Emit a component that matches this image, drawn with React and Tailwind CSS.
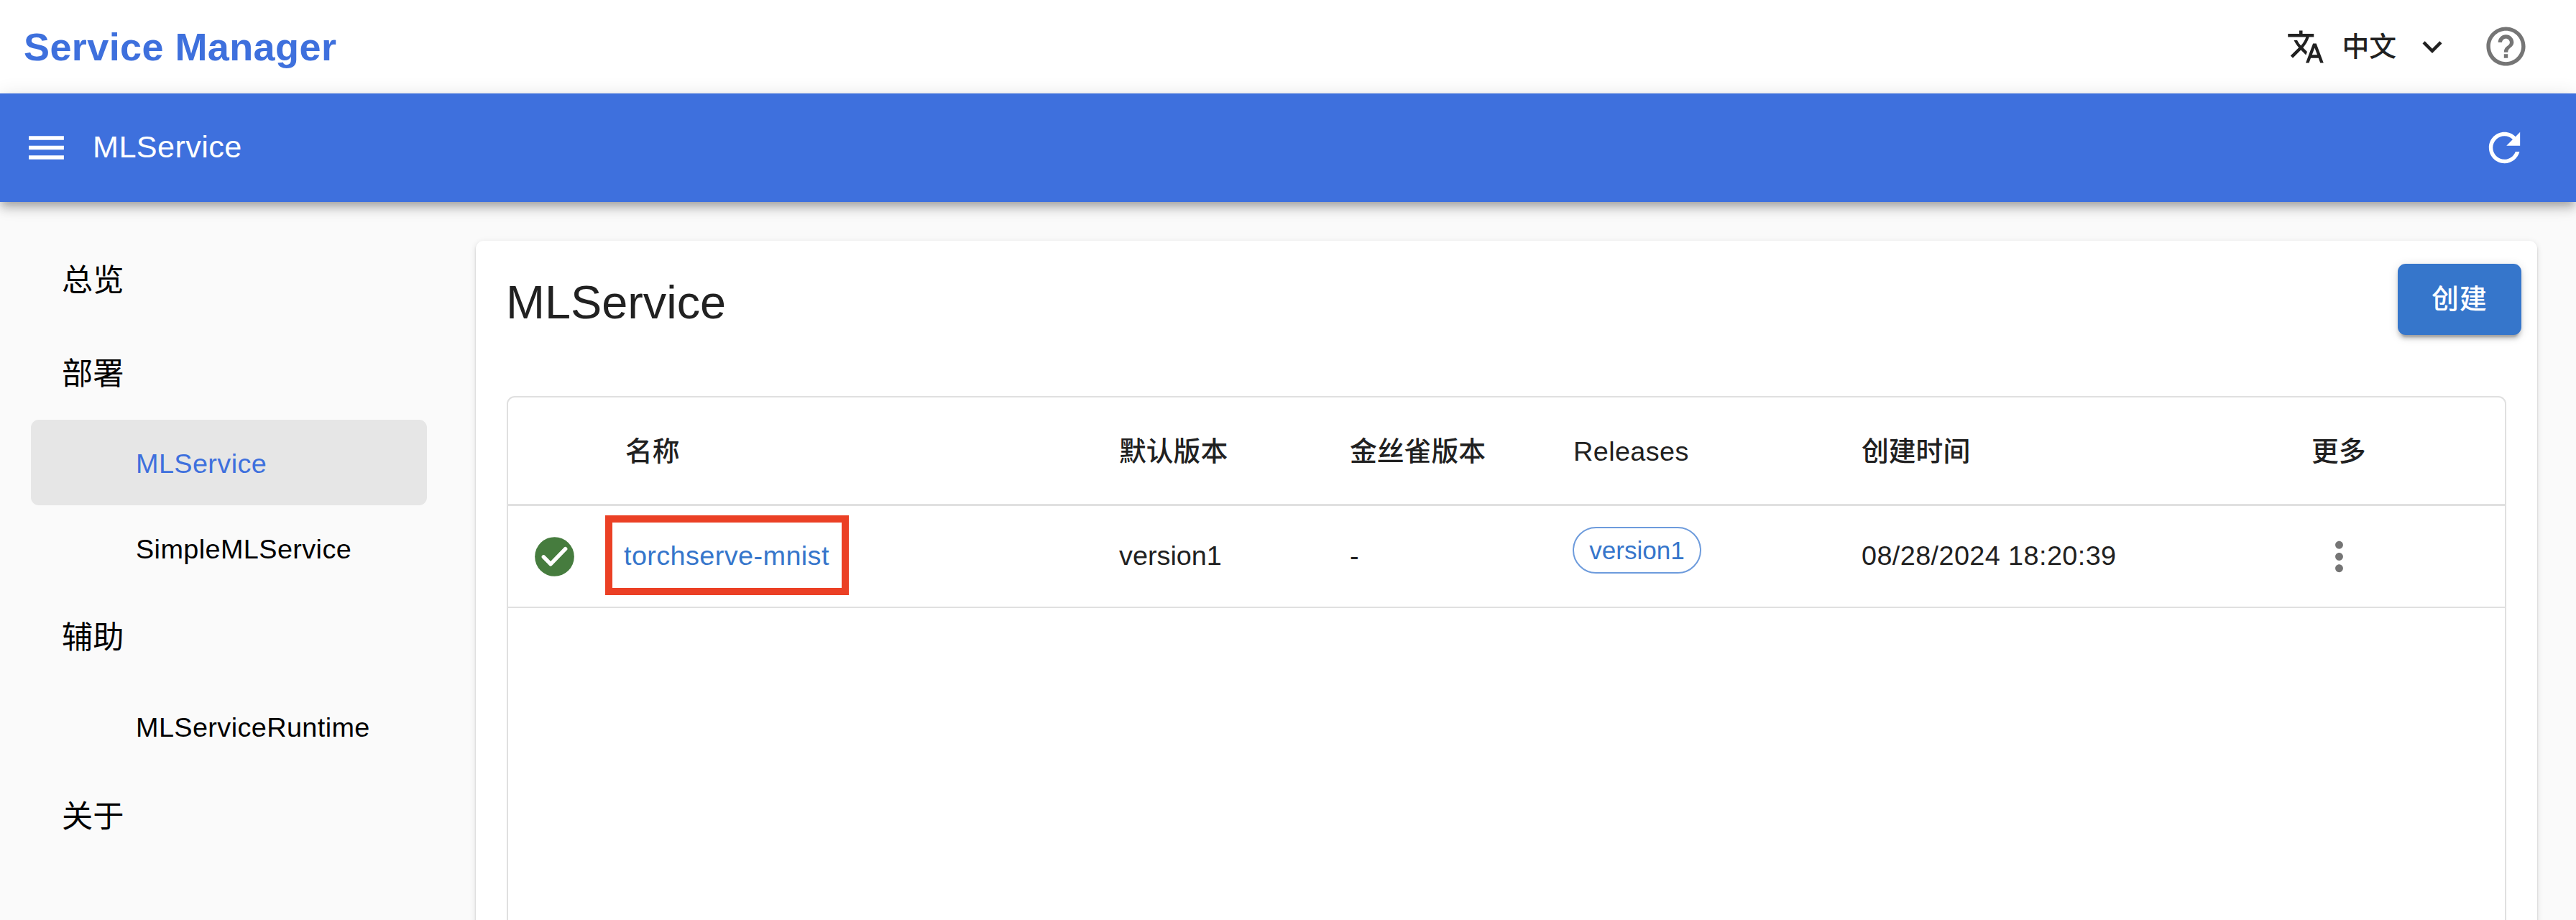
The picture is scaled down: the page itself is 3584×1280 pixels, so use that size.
const CHILD = 'flex h-[118.8px] items-center rounded-[11px] pt-[3px] pl-[146px] text-[37.8px] tracking-[0.0107em]';
const GROUP = 'flex h-[129.6px] items-center pt-[2px] pl-[43px] text-[43.2px]';

// Material-style 24-unit glyph
function Glyph({ d, className }) {
  return (
    <svg viewBox="0 0 24 24" fill="currentColor" className={className}>
      <path d={d} />
    </svg>
  );
}

const ICONS = {
  translate:
    'm12.87 15.07-2.54-2.51.03-.03c1.74-1.94 2.98-4.17 3.71-6.53H17V4h-7V2H8v2H1v1.99h11.17C11.5 7.92 10.44 9.75 9 11.35 8.07 10.32 7.3 9.19 6.69 8h-2c.73 1.63 1.73 3.17 2.98 4.56l-5.09 5.02L4 19l5-5 3.11 3.11.76-2.04zM18.5 10h-2L12 22h2l1.12-3h4.75L21 22h2l-4.5-12zm-2.62 7 1.62-4.33L19.12 17h-3.24z',
  expand: 'M16.59 8.59 12 13.17 7.41 8.59 6 10l6 6 6-6z',
  help: 'M11 18h2v-2h-2v2zm1-16C6.48 2 2 6.48 2 12s4.48 10 10 10 10-4.48 10-10S17.52 2 12 2zm0 18c-4.41 0-8-3.59-8-8s3.59-8 8-8 8 3.59 8 8-3.59 8-8 8zm0-14c-2.21 0-4 1.79-4 4h2c0-1.1.9-2 2-2s2 .9 2 2c0 2-3 1.75-3 5h2c0-2.25 3-2.5 3-5 0-2.21-1.79-4-4-4z',
  menu: 'M3 18h18v-2H3v2zm0-5h18v-2H3v2zm0-7v2h18V6H3z',
  refresh:
    'M17.65 6.35C16.2 4.9 14.21 4 12 4c-4.42 0-7.99 3.58-7.99 8s3.57 8 7.99 8c3.73 0 6.84-2.55 7.73-6h-2.08c-.82 2.33-3.04 4-5.65 4-3.31 0-6-2.69-6-6s2.69-6 6-6c1.66 0 3.14.69 4.22 1.78L13 11h7V4l-2.35 2.35z',
  more: 'M12 8c1.1 0 2-.9 2-2s-.9-2-2-2-2 .9-2 2 .9 2 2 2zm0 2c-1.1 0-2 .9-2 2s.9 2 2 2 2-.9 2-2-.9-2-2-2zm0 6c-1.1 0-2 .9-2 2s.9 2 2 2 2-.9 2-2-.9-2-2-2z',
};

const COLS = 'grid grid-cols-[163px_687px_321px_311px_401px_548px_1fr] items-center';

export default function App() {
  return (
    <div className="flex h-[1280px] w-[3584px] flex-col overflow-hidden bg-[#fafafa] font-['Liberation_Sans','Noto_Sans_CJK_SC',sans-serif] text-[#212121]">
      <header className="flex h-[130px] shrink-0 items-center bg-white pl-[33px]">
        <h1 className="text-[54px] font-bold leading-none tracking-[0.0075em] text-[#3e70dd]">Service Manager</h1>
        <div className="ml-auto mr-[65px] flex h-[129px] items-center self-start">
          <Glyph d={ICONS.translate} className="size-[54px]" />
          <span className="ml-[23px] mr-[23px] pt-[2px] text-[37.8px] font-medium leading-none">中文</span>
          <Glyph d={ICONS.expand} className="size-[54px]" />
          <Glyph d={ICONS.help} className="ml-[43px] size-[65px] text-[#757575]" />
        </div>
      </header>

      <div className="relative flex h-[151px] shrink-0 items-center bg-[#3e70dd] pl-8 pr-[67px] text-white shadow-[0_5.4px_10.8px_-2.7px_rgba(0,0,0,0.2),0_10.8px_13.5px_0_rgba(0,0,0,0.14),0_2.7px_27px_0_rgba(0,0,0,0.12)]">
        <Glyph d={ICONS.menu} className="size-[65px]" />
        <span className="ml-[32px] pb-[2px] text-[43.2px] leading-none tracking-[0.0094em]">MLService</span>
        <Glyph d={ICONS.refresh} className="ml-auto size-[65px]" />
      </div>

      <div className="flex min-h-0 flex-1">
        <nav className="w-[594px] shrink-0 pl-[43px] pt-[44px] text-black">
          <div className={GROUP}>总览</div>
          <div className={GROUP}>部署</div>
          <div className={`${CHILD} bg-[#e6e6e6] text-[#3e70dd]`}>MLService</div>
          <div className={CHILD}>SimpleMLService</div>
          <div className={GROUP}>辅助</div>
          <div className={CHILD}>MLServiceRuntime</div>
          <div className={GROUP}>关于</div>
        </nav>

        <main className="ml-[68px] mt-[54px] flex h-[1100px] w-[2868px] flex-col rounded-[11px] bg-white pl-[43px] pr-[43px] shadow-[0_5.4px_2.7px_-2.7px_rgba(0,0,0,0.2),0_2.7px_2.7px_0_rgba(0,0,0,0.14),0_2.7px_8.1px_0_rgba(0,0,0,0.12)]">
          <div className="flex h-[216px] shrink-0 items-start justify-between">
            <h2 className="-ml-px mt-[54px] text-[64.8px] leading-none">MLService</h2>
            <button className="-mr-[21px] mt-8 h-[99px] w-[172px] rounded-[11px] bg-[#3676cb] text-[37.8px] font-medium tracking-[0.0286em] text-white shadow-[0_8.1px_2.7px_-5.4px_rgba(0,0,0,0.2),0_5.4px_5.4px_0_rgba(0,0,0,0.14),0_2.7px_13.5px_0_rgba(0,0,0,0.12)]">
              创建
            </button>
          </div>

          <section className="flex-1 rounded-[11px] border-2 border-[#e0e0e0] text-[37.8px] leading-none">
            <div className={`${COLS} h-[151px] border-b-[3px] border-[#e0e0e0] pt-[4px] font-medium`}>
              <span />
              <span>名称</span>
              <span>默认版本</span>
              <span>金丝雀版本</span>
              <span className="font-normal tracking-[0.0107em]">Releases</span>
              <span>创建时间</span>
              <span className="pl-[78px]">更多</span>
            </div>
            <div className={`${COLS} h-[142px] border-b-2 border-[#e0e0e0] tracking-[0.0107em]`}>
              <svg viewBox="0 0 24 24" className="ml-8 size-[65px]">
                <circle cx="12" cy="12" r="10.1" fill="#467c3e" />
                <path d="M6.4 12.1 10 15.8 17.6 8" fill="none" stroke="#fff" strokeWidth="2" strokeLinecap="round" strokeLinejoin="round" />
              </svg>
              <span className="-ml-[28px] -mt-[3px] flex h-[111px] w-[339px] items-center border-[10px] border-[#eb4025] pl-[16px] pt-[3px] text-[#3676cb]">
                torchserve-mnist
              </span>
              <span className="tracking-normal">version1</span>
              <span>-</span>
              <span className="-ml-px -mt-[17px] flex h-[65px] w-[179px] items-center justify-center rounded-full border-2 border-[#6d9bdc] text-[35.1px] tracking-normal text-[#3676cb]">
                version1
              </span>
              <span>08/28/2024 18:20:39</span>
              <Glyph d={ICONS.more} className="ml-[84px] size-[65px] text-[#757575]" />
            </div>
          </section>
        </main>
      </div>
    </div>
  );
}
